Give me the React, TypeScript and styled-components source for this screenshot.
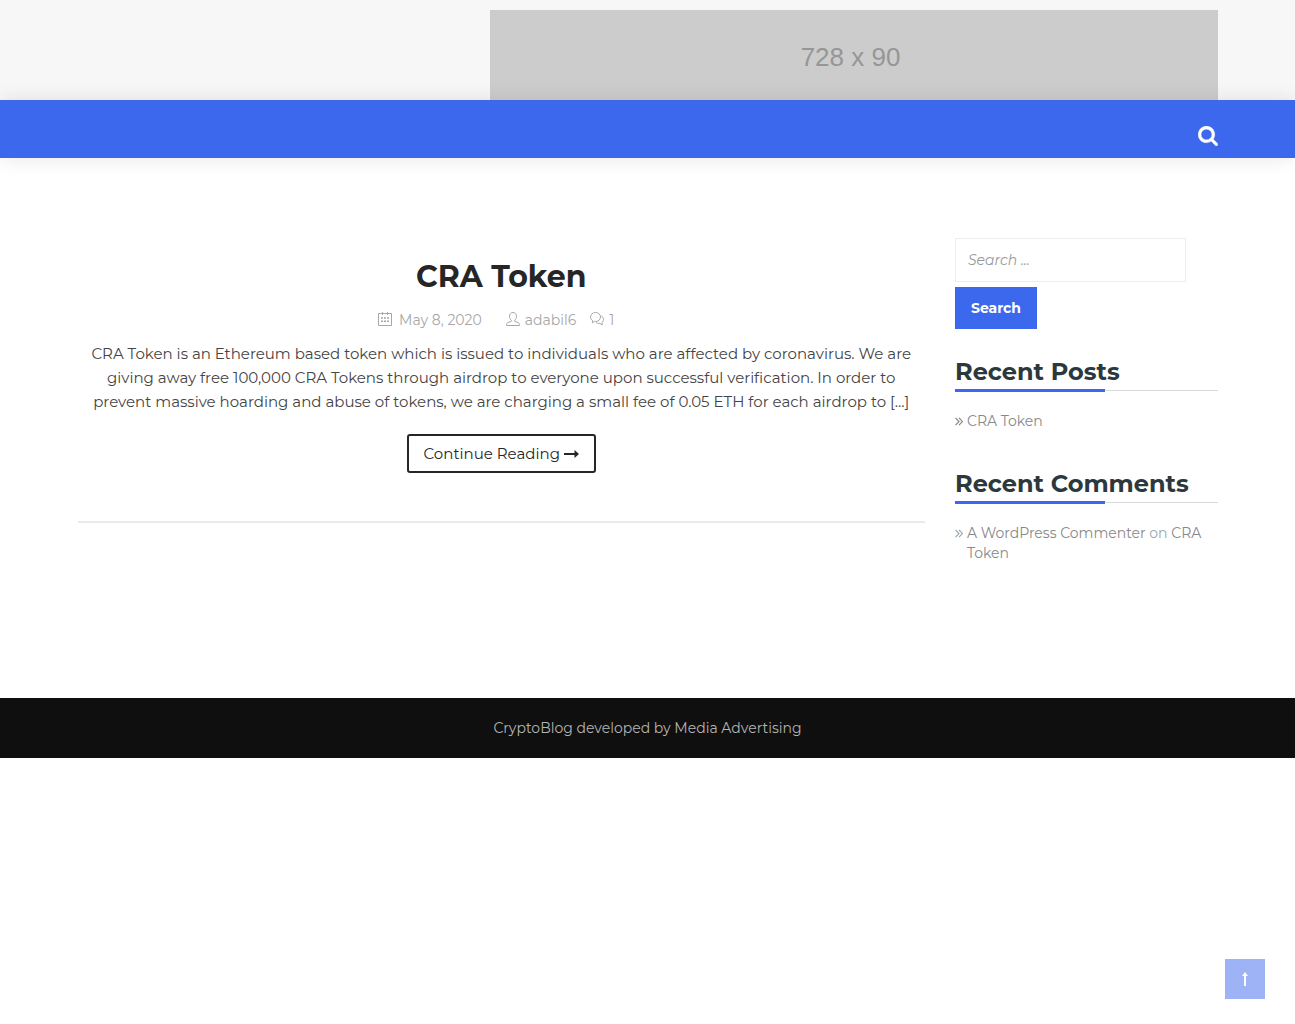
import React from "react";
import styled, { createGlobalStyle } from "styled-components";

const blue = "#3c68ee";
const ink = "#262626";
const muted = "#888888";

const GlobalStyle = createGlobalStyle`
  *, *::before, *::after { box-sizing: border-box; }
  body {
    margin: 0;
    background: #fff;
    color: #444;
    font-family: Montserrat, Inter, "Liberation Sans", sans-serif;
    font-size: 15px;
    line-height: 24px;
  }
  a { color: inherit; text-decoration: none; }
  h1, h2, p, ul { margin: 0; padding: 0; }
  svg { display: block; flex: none; }
`;

const Container = styled.div`
  max-width: 1170px;
  margin: 0 auto;
  padding: 0 15px;
`;

const TopBar = styled.header`
  background: #f7f7f7;
  padding-top: 10px;
`;

const Banner = styled.a`
  display: flex;
  align-items: center;
  justify-content: center;
  width: 728px;
  max-width: 100%;
  height: 90px;
  margin-left: auto;
  padding: 4px 6px 0 0;
  background: #ccc;
  color: #969696;
  font-family: "Liberation Sans Narrow", "Arial Narrow", "Liberation Sans", sans-serif;
  font-size: 26px;
`;

const NavBar = styled.nav`
  position: relative;
  background: ${blue};
  box-shadow: 0 0 20px rgba(0, 0, 0, 0.1);
`;

const NavInner = styled(Container)`
  display: flex;
  justify-content: flex-end;
  align-items: center;
  height: 58px;
  padding-top: 14px;
`;

const IconButton = styled.button`
  border: 0;
  padding: 0;
  background: none;
  color: #fff;
  cursor: pointer;
`;

const Columns = styled(Container)`
  display: grid;
  grid-template-columns: minmax(0, 3fr) minmax(0, 1fr);
  padding: 80px 0 135px;
  @media (max-width: 800px) { grid-template-columns: 1fr; }
`;

const Main = styled.main`
  padding: 0 15px;
`;

const Sidebar = styled.aside`
  padding: 0 15px;
`;

const Post = styled.article`
  display: flex;
  flex-direction: column;
  align-items: center;
  padding: 21px 12px 48px;
  border-bottom: 2px solid #eaeaea;
  text-align: center;
`;

const PostTitle = styled.h1`
  color: ${ink};
  font-size: 30px;
  line-height: 36px;
  font-weight: 700;
`;

const Meta = styled.div`
  display: flex;
  align-items: center;
  margin: 13px 10px 10px 0;
  color: #a8a8a8;
  font-size: 14px;
  line-height: 24px;
`;

const MetaItem = styled.a<{ $gap: number; $after?: number }>`
  display: flex;
  align-items: center;
  gap: ${(p) => p.$gap}px;
  margin-right: ${(p) => p.$after ?? 0}px;
  svg { margin-bottom: 2px; }
`;

const Excerpt = styled.p`
  font-size: 15px;
  line-height: 24px;
`;

const ReadMore = styled.a`
  display: flex;
  align-items: center;
  gap: 4px;
  margin-top: 20px;
  padding: 6px 15px 5px;
  border: 2px solid ${ink};
  border-radius: 3px;
  color: ${ink};
  font-size: 15px;
`;

const SearchForm = styled.form`
  display: flex;
  flex-direction: column;
  align-items: flex-start;
  gap: 5px;
`;

const SearchInput = styled.input`
  width: 231px;
  max-width: 100%;
  height: 44px;
  padding: 0 12px;
  border: 1px solid #ebeeee;
  background: #fff;
  color: ${muted};
  font: italic 14px Montserrat, Inter, sans-serif;
  &::placeholder { color: #999; opacity: 1; }
`;

const SearchButton = styled.button`
  height: 42px;
  padding: 0 16px;
  border: 0;
  background: ${blue};
  color: #fff;
  font: 700 14px Montserrat, Inter, sans-serif;
  cursor: pointer;
`;

const Widget = styled.section`
  margin-top: 28px;
  & + & { margin-top: 38px; }
`;

const WidgetTitle = styled.h2`
  margin-bottom: 20px;
  border-bottom: 1px solid #d6dbde;
  color: #2d383c;
  font-size: 24px;
  line-height: 30px;
  font-weight: 700;
  white-space: nowrap;
  &::after {
    content: "";
    display: block;
    width: 150px;
    height: 3px;
    margin: 2px 0 -2px;
    background: ${blue};
  }
`;

const List = styled.ul`
  list-style: none;
`;

const Item = styled.li<{ $mark: string }>`
  display: flex;
  gap: 4px;
  color: ${(p) => p.$mark};
  font-size: 14px;
  line-height: 20px;
  svg { margin-top: 6px; }
  a { color: ${muted}; }
`;

const Footer = styled.footer`
  padding: 18px 15px;
  background: #0f0f0f;
  color: #b4b4b4;
  font-size: 14px;
  text-align: center;
`;

const ToTop = styled.a`
  position: fixed;
  right: 30px;
  bottom: 25px;
  display: flex;
  align-items: center;
  justify-content: center;
  width: 40px;
  height: 40px;
  background: ${blue};
  color: #fff;
  opacity: 0.5;
`;

const SearchIcon = () => (
  <svg width="20" height="20" viewBox="54 118 1684 1684" fill="currentColor" stroke="currentColor" strokeWidth="20" aria-hidden="true">
    <path d="M1216 832q0-185-131.500-316.500t-316.500-131.500-316.500 131.500-131.500 316.500 131.500 316.500 316.500 131.500 316.500-131.500 131.500-316.500zm512 832q0 52-38 90t-90 38q-54 0-90-38l-343-342q-179 124-399 124-143 0-273.500-55.500t-225-150-150-225-55.500-273.500 55.500-273.500 150-225 225-150 273.500-55.500 273.500 55.500 225 150 150 225 55.500 273.500q0 220-124 399l343 343q37 37 37 90z" />
  </svg>
);

const CalendarIcon = () => (
  <svg width="14" height="14" viewBox="0 0 14 14" fill="none" stroke="currentColor" aria-hidden="true">
    <path d="M.5 1.500h13v12H.5zM4.500 0v3M9.500 0v3" />
    <path d="M3 6h2M6 6h2M9 6h2M3 9.200h2M6 9.200h2M9 9.200h2" strokeWidth="1.600" />
  </svg>
);

const UserIcon = () => (
  <svg width="14" height="14" viewBox="0 0 14 14" fill="none" stroke="currentColor" aria-hidden="true">
    <path d="M5.300 8.300C4.200 7.300 3.500 5.800 3.500 4.200 3.500 2 4.900.5 7 .5s3.500 1.500 3.500 3.700c0 1.600-.7 3.100-1.800 4.100v1.100l3.500 1.200c.8.300 1.300 1 1.300 1.800v1.100H.5v-1.100c0-.8.5-1.500 1.300-1.800l3.500-1.200z" />
  </svg>
);

const CommentsIcon = () => (
  <svg width="14" height="14" viewBox="0 0 14 14" fill="none" stroke="currentColor" aria-hidden="true">
    <path d="M2.400 10.800l.1-2.300C1.300 7.700.5 6.400.5 5 .5 2.500 2.700.5 5.500.5s5 2 5 4.500-2.200 4.500-5 4.500c-.4 0-.8 0-1.200-.1z" />
    <path d="M11.300 3.800c1.300.7 2.200 2 2.200 3.500 0 1.200-.6 2.300-1.500 3l.2 2.700-2.400-1.700c-1.500.3-3-.1-4-1" />
  </svg>
);

const ArrowRight = () => (
  <svg width="15" height="10" viewBox="0 0 15 10" fill="currentColor" aria-hidden="true">
    <path d="M0 4h10.500V1L15 5l-4.500 4V6H0z" />
  </svg>
);

const ArrowUp = () => (
  <svg width="6" height="14" viewBox="0 0 6 14" fill="currentColor" aria-hidden="true">
    <path d="M3 0l3 4H4v10H2V4H0z" />
  </svg>
);

const DoubleAngle = () => (
  <svg width="8" height="9" viewBox="0 0 8 9" fill="none" stroke="currentColor" strokeWidth="1.200" aria-hidden="true">
    <path d="M.5.8l3.500 3.700L.5 8.200M4 .8l3.500 3.700L4 8.200" />
  </svg>
);

export default function App() {
  return (
    <>
      <GlobalStyle />
      <TopBar>
        <Container>
          <Banner href="#">728 x 90</Banner>
        </Container>
      </TopBar>
      <NavBar>
        <NavInner>
          <IconButton type="button" aria-label="Open search"><SearchIcon /></IconButton>
        </NavInner>
      </NavBar>
      <Columns>
        <Main>
          <Post>
            <PostTitle><a href="#">CRA Token</a></PostTitle>
            <Meta>
              <MetaItem href="#" $gap={7} $after={24}><CalendarIcon />May 8, 2020</MetaItem>
              <MetaItem href="#" $gap={5} $after={14}><UserIcon />adabil6</MetaItem>
              <MetaItem href="#" $gap={5}><CommentsIcon />1</MetaItem>
            </Meta>
            <Excerpt>
              CRA Token is an Ethereum based token which is issued to individuals who are affected by coronavirus. We are giving away free 100,000 CRA Tokens through airdrop to everyone upon successful verification. In order to prevent massive hoarding and abuse of tokens, we are charging a small fee of 0.05 ETH for each airdrop to […]
            </Excerpt>
            <ReadMore href="#">Continue Reading <ArrowRight /></ReadMore>
          </Post>
        </Main>
        <Sidebar>
          <SearchForm role="search" onSubmit={(e) => e.preventDefault()}>
            <SearchInput type="search" aria-label="Search for" placeholder="Search ..." />
            <SearchButton type="submit">Search</SearchButton>
          </SearchForm>
          <Widget>
            <WidgetTitle>Recent Posts</WidgetTitle>
            <List>
              <Item $mark={muted}><DoubleAngle /><a href="#">CRA Token</a></Item>
            </List>
          </Widget>
          <Widget>
            <WidgetTitle>Recent Comments</WidgetTitle>
            <List>
              <Item $mark="#9aa8b2">
                <DoubleAngle />
                <span><a href="#">A WordPress Commenter</a> on <a href="#">CRA Token</a></span>
              </Item>
            </List>
          </Widget>
        </Sidebar>
      </Columns>
      <Footer>CryptoBlog developed by Media Advertising</Footer>
      <ToTop href="#" aria-label="Back to top"><ArrowUp /></ToTop>
    </>
  );
}
